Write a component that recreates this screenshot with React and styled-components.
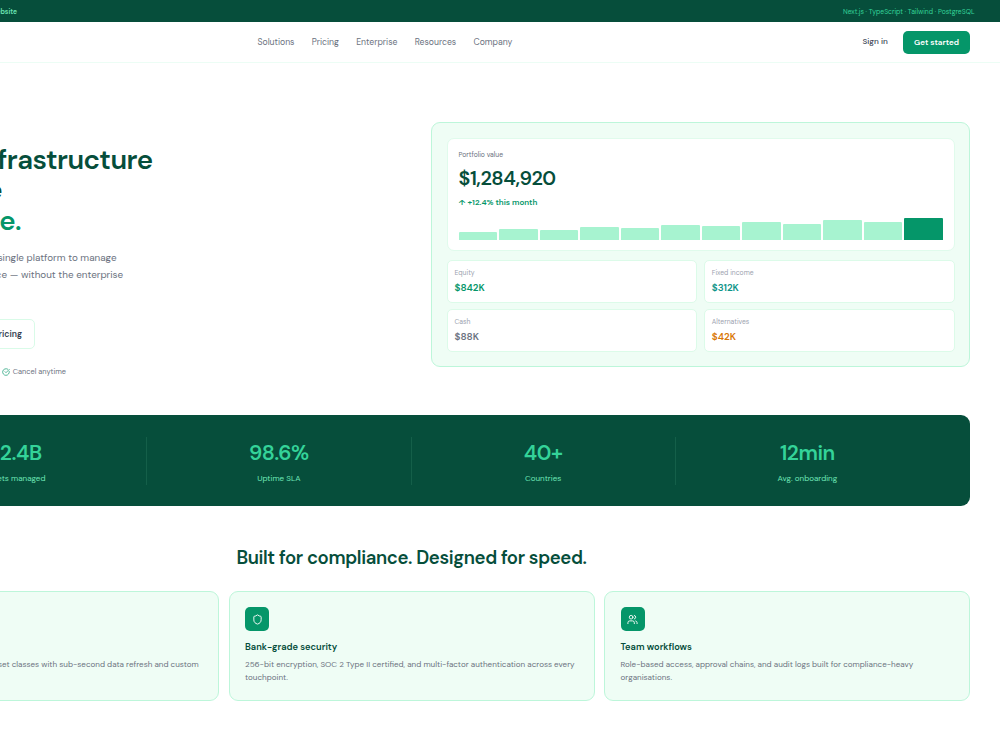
import React from 'react';
import styled, { createGlobalStyle } from 'styled-components';
import { CircleCheckBig, Shield, Users } from 'lucide-react';

const GlobalStyle = createGlobalStyle`
  * {
    box-sizing: border-box;
  }
  body {
    margin: 0;
    background: #fff;
    font-family: 'DM Sans', Inter, 'Liberation Sans', sans-serif;
    overflow: hidden;
  }
`;

// The page is wider than the window and stays aligned to its right edge.
const Viewport = styled.div`
  display: flex;
  justify-content: flex-end;
  width: 1000px;
  height: 750px;
  overflow: hidden;
`;

const Page = styled.div`
  flex: none;
  width: 1177px;
`;

const Text = styled.span`
  display: block;
  white-space: nowrap;
  font-size: ${p => p.$size}px;
  font-weight: ${p => p.$weight || 400};
  line-height: ${p => p.$line || 12}px;
  min-height: ${p => p.$line || 12}px;
  letter-spacing: ${p => p.$track || 0}px;
  color: ${p => p.$color};
`;

const TopBar = styled.div`
  display: flex;
  justify-content: space-between;
  align-items: center;
  height: 22px;
  padding: 1px 25.5px 0 0;
  background: #064e3b;
`;

const TopTitle = styled.div`
  display: flex;
  justify-content: flex-end;
  width: 194px;
`;

const Nav = styled.nav`
  display: flex;
  justify-content: flex-end;
  align-items: center;
  height: 41px;
  padding-right: 30px;
  border-bottom: 1px solid #ecfdf5;
`;

const NavLinks = styled.div`
  display: flex;
  gap: 17.3px;
  width: 605px;
`;

const SignIn = styled.div`
  width: 40.5px;
`;

const StartButton = styled.button`
  display: flex;
  align-items: center;
  justify-content: center;
  width: 67px;
  height: 23px;
  padding: 0;
  border: 0;
  border-radius: 5px;
  background: #059669;
  font-family: inherit;
`;

const Hero = styled.section`
  display: flex;
  justify-content: space-between;
  height: 352px;
  padding: 59px 30px 0;
`;

const HeroCopy = styled.div`
  padding-top: 22.7px;
`;

const Title = styled.h1`
  margin: 0;
`;

const Lead = styled.div`
  padding-top: 13px;
`;

const Line = styled.div`
  display: flex;
  justify-content: flex-end;
  width: ${p => p.$width}px;
`;

const OutlineButton = styled.button`
  display: flex;
  align-items: center;
  justify-content: flex-end;
  width: 182px;
  height: 30px;
  margin-top: 35.3px;
  padding: 0 12px 0 0;
  border: 1px solid #d9fbe8;
  border-radius: 5px;
  background: #fff;
  font-family: inherit;
`;

const Perk = styled.div`
  display: flex;
  align-items: center;
  justify-content: flex-end;
  gap: 2.5px;
  width: 213px;
  margin-top: 17.8px;
  color: #059669;
`;

const Dashboard = styled.div`
  width: 539px;
  height: 245px;
  padding: 15px 14.5px;
  border: 1px solid #bdf6da;
  border-radius: 9px;
  background: #effdf5;
`;

const ValueCard = styled.div`
  height: 112.5px;
  padding: 10px 11px 0;
  border: 1px solid #e0fbec;
  border-radius: 7px;
  background: #fff;
`;

const Bars = styled.div`
  display: flex;
  align-items: flex-end;
  gap: 2px;
  height: 22px;
  margin-top: 9.5px;
`;

const Bar = styled.div`
  flex: 1;
  border-radius: 1px 1px 0 0;
  background: ${p => (p.$active ? '#059669' : '#a7f3d0')};
`;

const Holdings = styled.div`
  display: grid;
  grid-template-columns: 1fr 1fr;
  gap: 6.5px;
  margin-top: 9.9px;
`;

const Holding = styled.div`
  height: 42.5px;
  padding: 5.5px 7px;
  border: 1px solid #dcfbe9;
  border-radius: 5px;
  background: #fff;
`;

const Stats = styled.section`
  display: grid;
  grid-template-columns: repeat(4, 1fr);
  align-items: center;
  height: 91px;
  margin: 0 30px;
  padding: 0 30px;
  border-radius: 9px;
  background: #064e3b;
`;

const Stat = styled.div`
  display: flex;
  flex-direction: column;
  align-items: center;
  height: 48px;
  padding-top: 3px;
  border-right: 1px solid ${p => (p.$last ? 'transparent' : '#145f49')};
`;

const Features = styled.section`
  padding: 39.5px 30px 0;
`;

const Heading = styled.h2`
  display: flex;
  justify-content: center;
  margin: 0;
`;

const Cards = styled.div`
  display: grid;
  grid-template-columns: repeat(3, minmax(0, 1fr));
  gap: 9.5px;
  margin-top: 21px;
`;

const Card = styled.article`
  height: 110px;
  padding: 15.5px;
  border: 1px solid #bdf6da;
  border-radius: 9px;
  background: #effdf5;
`;

const IconTile = styled.div`
  display: flex;
  align-items: center;
  justify-content: center;
  width: 24px;
  height: 24px;
  margin-bottom: 9.6px;
  border-radius: 5px;
  background: #059669;
  color: #fff;
`;

const CardText = styled.div`
  display: flex;
  flex-direction: column;
  width: ${p => p.$width};
  align-items: ${p => p.$align};
  padding-top: 5.9px;
`;

const links = ['Solutions', 'Pricing', 'Enterprise', 'Resources', 'Company'];

const bars = [7.5, 11, 9.5, 13, 12, 14.8, 13.7, 17.5, 15.5, 19.3, 18, 21.7];

const holdings = [
  { label: 'Equity', value: '$842K', color: '#059669' },
  { label: 'Fixed income', value: '$312K', color: '#0d9488' },
  { label: 'Cash', value: '$88K', color: '#6b7280' },
  { label: 'Alternatives', value: '$42K', color: '#d97706' }
];

const stats = [
  { value: '$2.4B', label: 'Assets managed' },
  { value: '98.6%', label: 'Uptime SLA' },
  { value: '40+', label: 'Countries' },
  { value: '12min', label: 'Avg. onboarding' }
];

const features = [
  { lines: ['set classes with sub-second data refresh and custom'] },
  {
    icon: Shield,
    title: 'Bank-grade security',
    lines: [
      '256-bit encryption, SOC 2 Type II certified, and multi-factor authentication across every',
      'touchpoint.'
    ]
  },
  {
    icon: Users,
    title: 'Team workflows',
    lines: [
      'Role-based access, approval chains, and audit logs built for compliance-heavy',
      'organisations.'
    ]
  }
];

const Header = () => (
  <header>
    <TopBar>
      <TopTitle>
        <Text $size={6.8} $weight={600} $color="#6ee7b7">website</Text>
      </TopTitle>
      <Text $size={6.8} $color="#34d399">
        Next.js · TypeScript · Tailwind · PostgreSQL
      </Text>
    </TopBar>
    <Nav>
      <NavLinks>
        {links.map(link => (
          <Text key={link} $size={8.67} $color="#6b7280">{link}</Text>
        ))}
      </NavLinks>
      <SignIn>
        <Text $size={8.2} $weight={500} $color="#374151">Sign in</Text>
      </SignIn>
      <StartButton>
        <Text $size={8.05} $weight={600} $color="#fff">Get started</Text>
      </StartButton>
    </Nav>
  </header>
);

const Portfolio = () => (
  <Dashboard>
    <ValueCard>
      <Text $size={6.8} $color="#6b7280" $line={11}>Portfolio value</Text>
      <Text $size={19.8} $weight={600} $color="#064e3b" $line={36} $track={-0.41}>
        $1,284,920
      </Text>
      <Text $size={8.05} $weight={600} $color="#059669">↑ +12.4% this month</Text>
      <Bars>
        {bars.map((height, i) => (
          <Bar key={height} $active={i === bars.length - 1} style={{ height }} />
        ))}
      </Bars>
    </ValueCard>
    <Holdings>
      {holdings.map(item => (
        <Holding key={item.label}>
          <Text $size={6.8} $color="#9ca3af" $line={12.5}>{item.label}</Text>
          <Text $size={9.9} $weight={600} $color={item.color} $line={17}>
            {item.value}
          </Text>
        </Holding>
      ))}
    </Holdings>
  </Dashboard>
);

const App = () => (
  <Viewport>
    <GlobalStyle />
    <Page>
      <Header />
      <Hero>
        <HeroCopy>
          <Title>
            <Line $width={299.5}>
              <Text $size={27.6} $weight={600} $color="#064e3b" $line={30.8} $track={-0.52}>
                infrastructure
              </Text>
            </Line>
            <Line $width={149}>
              <Text $size={27.6} $weight={600} $color="#064e3b" $line={30.8} $track={-0.52}>e</Text>
            </Line>
            <Line $width={168}>
              <Text $size={27.6} $weight={600} $color="#059669" $line={30.8} $track={-0.52}>e.</Text>
            </Line>
          </Title>
          <Lead>
            <Line $width={263.5}>
              <Text $size={9.9} $color="#6b7280" $line={16.6}>single platform to manage</Text>
            </Line>
            <Line $width={270.2}>
              <Text $size={9.9} $color="#6b7280" $line={16.6}>ce — without the enterprise</Text>
            </Line>
          </Lead>
          <OutlineButton>
            <Text $size={8.67} $weight={600} $color="#374151">pricing</Text>
          </OutlineButton>
          <Perk>
            <CircleCheckBig size={8} />
            <Text $size={7.4} $color="#6b7280">Cancel anytime</Text>
          </Perk>
        </HeroCopy>
        <Portfolio />
      </Hero>
      <Stats>
        {stats.map((stat, i) => (
          <Stat key={stat.label} $last={i === stats.length - 1}>
            <Text $size={21} $weight={600} $color="#34d399" $line={26} $track={-0.42}>
              {stat.value}
            </Text>
            <Text $size={8.05} $color="#6ee7b7" $line={24}>{stat.label}</Text>
          </Stat>
        ))}
      </Stats>
      <Features>
        <Heading>
          <Text $size={18.55} $weight={600} $color="#064e3b" $line={24} $track={-0.37}>
            Built for compliance. Designed for speed.
          </Text>
        </Heading>
        <Cards>
          {features.map(({ icon: Icon, title, lines }) => (
            <Card key={lines[0]}>
              <IconTile>{Icon && <Icon size={11} strokeWidth={2} />}</IconTile>
              <Text $size={9.27} $weight={600} $color="#064e3b">{title}</Text>
              <CardText $width={title ? 'auto' : '329.2px'} $align={title ? 'flex-start' : 'flex-end'}>
                {lines.map(line => (
                  <Text key={line} $size={8.05} $color="#6b7280" $line={12.4}>{line}</Text>
                ))}
              </CardText>
            </Card>
          ))}
        </Cards>
      </Features>
    </Page>
  </Viewport>
);

export default App;
